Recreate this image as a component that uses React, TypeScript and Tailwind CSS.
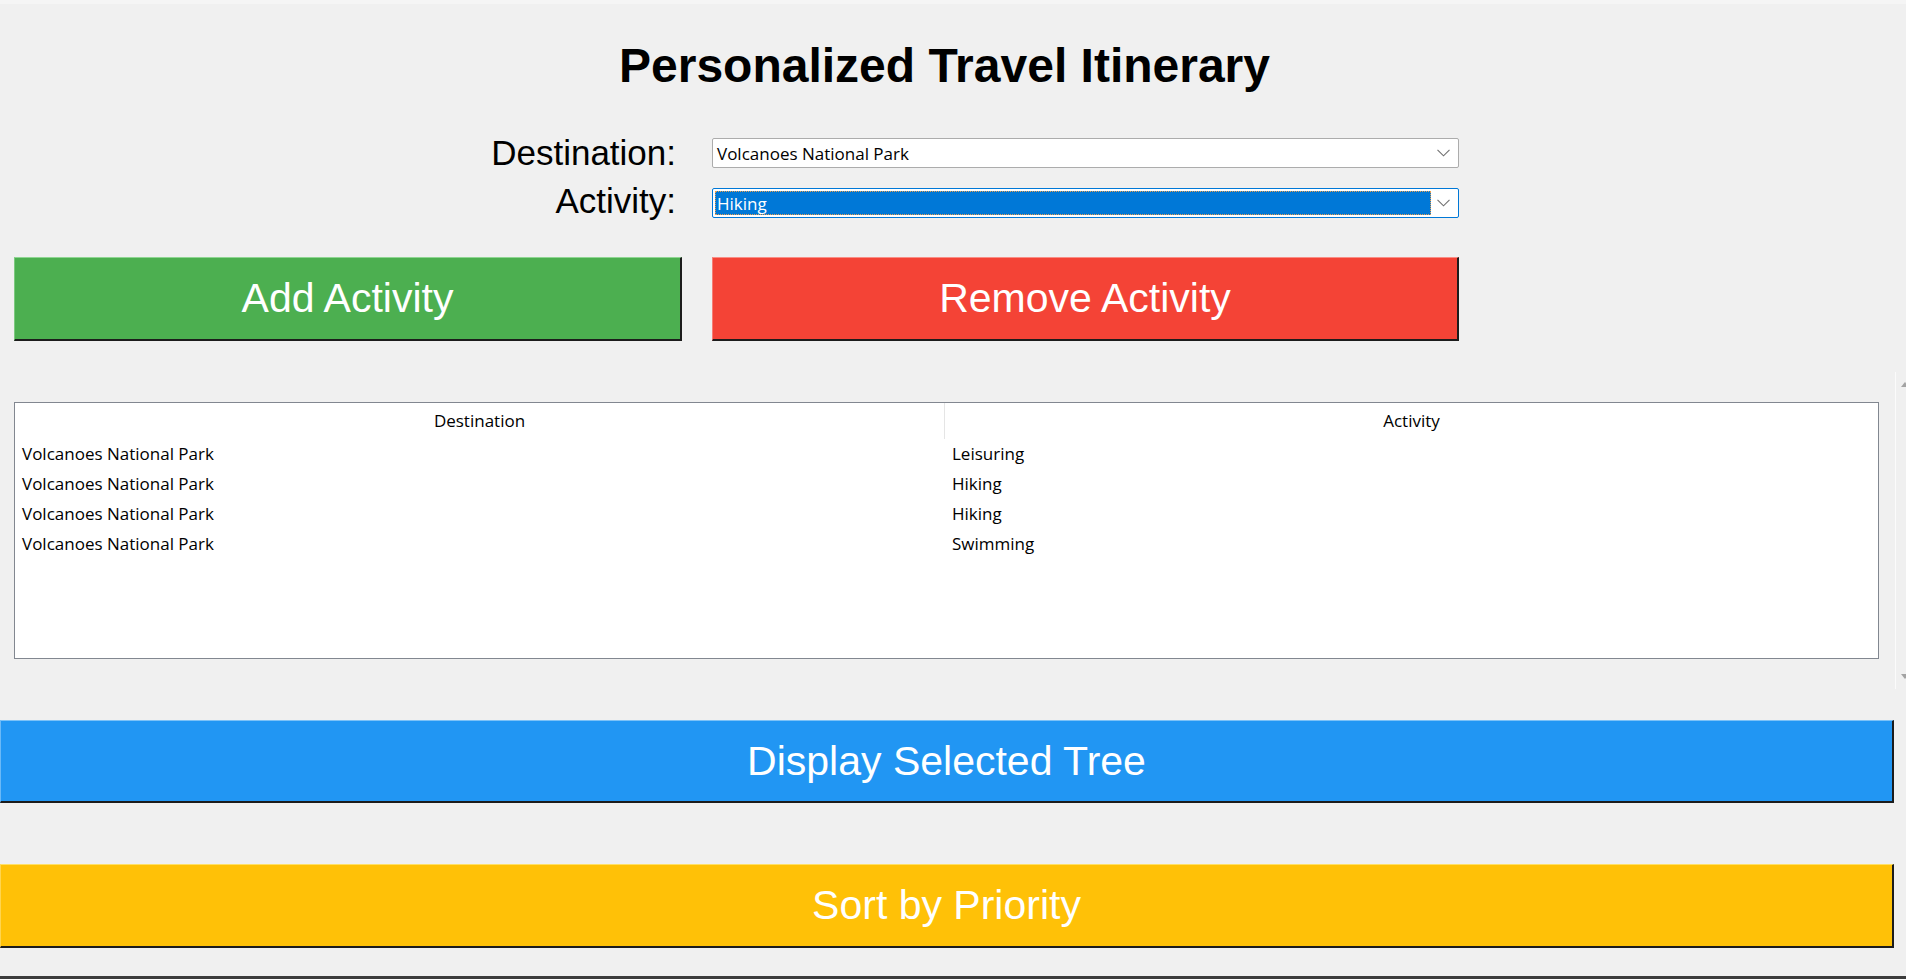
const uiFont = { fontFamily: '"Liberation Sans", Arial, sans-serif' };
const winFont = { fontFamily: '"Open Sans", "Noto Sans", sans-serif' };

const rows = [
  { destination: "Volcanoes National Park", activity: "Leisuring" },
  { destination: "Volcanoes National Park", activity: "Hiking" },
  { destination: "Volcanoes National Park", activity: "Hiking" },
  { destination: "Volcanoes National Park", activity: "Swimming" },
];

function Chevron() {
  return (
    <svg width="13" height="8" viewBox="0 0 13 8" fill="none">
      <polyline points="0.5,0.8 6.5,6.8 12.5,0.8" stroke="#707070" strokeWidth="1.1" />
    </svg>
  );
}

function Combo({ value, focused }: { value: string; focused?: boolean }) {
  return (
    <div
      className={
        "h-[30px] flex p-[2px] rounded-[2px] border bg-white " +
        (focused ? "border-[#0078d7]" : "border-[#acacac]")
      }
      style={winFont}
    >
      <div
        className={
          "flex-1 flex items-center px-[1px] text-[17px] leading-none border border-dotted " +
          (focused ? "bg-[#0078d7] text-white border-[#e8a050]" : "text-black border-transparent")
        }
      >
        {value}
      </div>
      <div className="w-[25px] flex items-center justify-center">
        <Chevron />
      </div>
    </div>
  );
}

function RaisedButton({
  label,
  className,
}: {
  label: string;
  className: string;
}) {
  return (
    <button
      className={
        "flex items-center justify-center text-white text-[41px] leading-none border-t border-l border-b-2 border-r-2 border-b-[#1c1c1c] border-r-[#1c1c1c] " +
        className
      }
      style={uiFont}
    >
      {label}
    </button>
  );
}

export default function App() {
  return (
    <div className="w-[1906px] h-[979px] bg-[#f0f0f0] flex flex-col overflow-hidden">
      <div className="h-[4px] bg-[#f5f5f5]" />

      <h1
        className="mt-[38px] w-[1889px] text-center text-[48px] leading-[47px] font-bold text-black"
        style={uiFont}
      >
        Personalized Travel Itinerary
      </h1>

      <div className="mt-[49px] ml-[14px] grid grid-cols-[668px_747px] gap-x-[30px] gap-y-[20px]">
        <div className="h-[30px] pr-[6px] text-right text-[35px] leading-[30px] text-black" style={uiFont}>
          Destination:
        </div>
        <Combo value="Volcanoes National Park" />
        <div className="-mt-[2px] h-[30px] pr-[6px] text-right text-[35px] leading-[30px] text-black" style={uiFont}>
          Activity:
        </div>
        <Combo value="Hiking" focused />

        <RaisedButton
          label="Add Activity"
          className="mt-[19px] h-[84px] bg-[#4caf50] border-t-[#8fd692] border-l-[#7cc97f]"
        />
        <RaisedButton
          label="Remove Activity"
          className="mt-[19px] h-[84px] bg-[#f44336] border-t-[#f98d85] border-l-[#f77d74]"
        />
      </div>

      <div className="mt-[31px] h-[317px] flex items-center">
        <div
          className="ml-[14px] w-[1865px] h-[257px] bg-white border border-[#828790] flex flex-col"
          style={winFont}
        >
          <div className="h-[36px] flex text-[17px] text-black">
            <div className="w-[930px] border-r border-[#e5e5e5] flex items-center justify-center">
              Destination
            </div>
            <div className="flex-1 flex items-center justify-center">Activity</div>
          </div>
          {rows.map((r, i) => (
            <div key={i} className="h-[30px] flex items-center text-[17px] text-black">
              <div className="w-[931px] pl-[7px]">{r.destination}</div>
              <div className="flex-1 pl-[6px]">{r.activity}</div>
            </div>
          ))}
        </div>
        <div className="ml-[16px] w-[11px] self-stretch overflow-hidden border-l border-[#fbfbfb]">
          <div className="w-[17px] h-full flex flex-col items-center justify-between py-[10px]">
            <svg width="8" height="5" viewBox="0 0 8 5">
              <polygon points="0,5 4,0 8,5" fill="#a3a3a3" />
            </svg>
            <svg width="8" height="5" viewBox="0 0 8 5">
              <polygon points="0,0 8,0 4,5" fill="#a3a3a3" />
            </svg>
          </div>
        </div>
      </div>

      <RaisedButton
        label="Display Selected Tree"
        className="mt-[31px] w-[1894px] h-[83px] bg-[#2196f3] border-t-[#7cc2f8] border-l-[#6ab9f7]"
      />
      <RaisedButton
        label="Sort by Priority"
        className="mt-[61px] w-[1894px] h-[84px] bg-[#ffc107] border-t-[#ffe066] border-l-[#ffd54f]"
      />

      <div className="mt-auto h-[3px] bg-[#3c3c3c]" />
    </div>
  );
}
